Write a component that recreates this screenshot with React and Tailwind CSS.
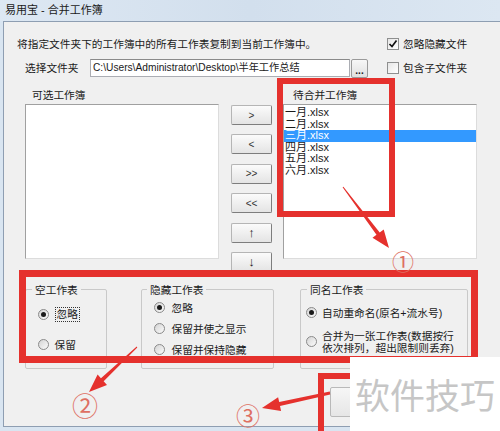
export default function App() {
  const Radio = ({ on }) => (
    <span className="relative flex items-center justify-center w-[11px] h-[11px] shrink-0 rounded-full border border-[#8a8a8a] bg-gradient-to-br from-[#d4d4d4] to-[#fbfbfb]">
      {on && <span className="w-[5px] h-[5px] rounded-full bg-[#1a1a1a]" />}
    </span>
  );
  const Check = ({ on }) => (
    <span className="flex items-center justify-center w-[12px] h-[12px] shrink-0 border border-[#8e8f8f] bg-gradient-to-br from-[#e6e6e6] to-[#ffffff]">
      {on && (
        <svg width="10" height="10" viewBox="0 0 10 10">
          <path d="M1.5 5 L4 7.5 L8.5 1.5" fill="none" stroke="#111" strokeWidth="1.7" />
        </svg>
      )}
    </span>
  );
  const btns = [">", "<", ">>", "<<", "↑", "↓"];
  const items = ["一月.xlsx", "二月.xlsx", "三月.xlsx", "四月.xlsx", "五月.xlsx", "六月.xlsx"];
  return (
    <div className="relative w-[500px] h-[431px] overflow-hidden bg-[#d9e5f1] text-[#1a1a1a] font-[family-name:'Liberation_Sans','Noto_Sans_CJK_SC',sans-serif]">
      <div className="h-[21px] flex items-center pl-[5px] text-[11px] bg-gradient-to-r from-[#dde8f3] via-[#d2dfed] to-[#dce7f2]">
        易用宝 - 合并工作簿
      </div>
      <div className="ml-[3px] h-[406px] border border-r-0 border-[#8e9eb2] bg-[#f0f0f0]">
        {/* top section */}
        <div className="flex pt-[14px]">
          <div className="pl-[13px]">
            <div className="text-[10.7px] leading-[16px]">将指定文件夹下的工作簿中的所有工作表复制到当前工作簿中。</div>
            <div className="flex items-center mt-[7px] ml-[8px] h-[18px]">
              <span className="w-[65px] text-[10.7px] leading-[16px]">选择文件夹</span>
              <div className="w-[260px] h-[18px] bg-white border border-[#abadb3] border-t-[#8a8a8a] flex items-center pl-[2px] text-[10.2px] whitespace-nowrap overflow-hidden">
                C:\Users\Administrator\Desktop\半年工作总结
              </div>
              <div className="ml-[1px] w-[17px] h-[19px] border border-[#9a9a9a] rounded-[2px] bg-gradient-to-b from-[#f7f7f7] to-[#e0e0e0] flex items-end justify-center text-[10px] leading-[12px] font-bold">
                ...
              </div>
            </div>
          </div>
          <div className="ml-[19px] flex flex-col gap-[8px]">
            <div className="h-[16px] flex items-center gap-[4px] text-[10.7px]">
              <Check on />
              <span>忽略隐藏文件</span>
            </div>
            <div className="h-[16px] flex items-center gap-[4px] text-[10.7px]">
              <Check />
              <span>包含子文件夹</span>
            </div>
          </div>
        </div>

        {/* middle section */}
        <div className="flex mt-[11px] ml-[21px]">
          <div className="w-[194px]">
            <div className="h-[14px] leading-[14px] pl-[7px] text-[10.7px]">可选工作簿</div>
            <div className="mt-[2px] h-[155px] bg-white border border-[#dcdcdc] border-t-[#a0a0a0] border-l-[#a0a0a0]" />
          </div>
          <div className="ml-[12px] w-[41px] pt-[17px] flex flex-col gap-[9.4px]">
            {btns.map((b) => (
              <div
                key={b}
                className={
                  b === "↑" || b === "↓"
                    ? "h-[20px] flex items-center justify-center rounded-[2px] border border-[#b5b5b5] border-b-[#7d7d7d] border-r-[#7d7d7d] bg-gradient-to-b from-[#fbfbfb] to-[#e4e4e4] text-[13px] font-bold text-[#222]"
                    : "h-[20px] flex items-center justify-center rounded-[2px] border border-[#b5b5b5] border-b-[#7d7d7d] border-r-[#7d7d7d] bg-gradient-to-b from-[#fbfbfb] to-[#e4e4e4] text-[10px] text-[#333]"
                }
              >
                {b}
              </div>
            ))}
          </div>
          <div className="ml-[11px] w-[194px]">
            <div className="h-[14px] leading-[14px] pl-[10px] text-[10.7px]">待合并工作簿</div>
            <div className="mt-[2px] h-[155px] bg-white border border-[#dcdcdc] border-t-[#a0a0a0] border-l-[#a0a0a0] pt-[2px]">
              {items.map((it, i) => (
                <div
                  key={it}
                  className={
                    i === 2
                      ? "h-[11.6px] leading-[11.6px] pl-[1px] text-[11px] bg-[#3399ff] text-white"
                      : "h-[11.6px] leading-[11.6px] pl-[1px] text-[11px]"
                  }
                >
                  {it}
                </div>
              ))}
            </div>
          </div>
        </div>

        {/* option groups */}
        <div className="flex mt-[11px] ml-[21px]">
          <fieldset className="w-[82px] h-[86px] border border-[#c9c9c9] rounded-[2px]">
            <legend className="ml-[6px] px-[3px] text-[10.7px] leading-[14px]">空工作表</legend>
            <div className="pt-[10px] pl-[11.5px] flex flex-col gap-[14px] text-[10.7px]">
              <div className="h-[16px] flex items-center gap-[6px]">
                <Radio on />
                <span className="border border-dotted border-[#333] px-[1px] leading-[13px]">忽略</span>
              </div>
              <div className="h-[16px] flex items-center gap-[6px]">
                <Radio />
                <span>保留</span>
              </div>
            </div>
          </fieldset>
          <fieldset className="ml-[34px] w-[133px] h-[86px] border border-[#c9c9c9] rounded-[2px]">
            <legend className="ml-[5px] px-[3px] text-[10.7px] leading-[14px]">隐藏工作表</legend>
            <div className="pt-[3px] pl-[11.5px] flex flex-col gap-[5px] text-[10.7px]">
              <div className="h-[16px] flex items-center gap-[7px]">
                <Radio on />
                <span>忽略</span>
              </div>
              <div className="h-[16px] flex items-center gap-[7px]">
                <Radio />
                <span>保留并使之显示</span>
              </div>
              <div className="h-[16px] flex items-center gap-[7px]">
                <Radio />
                <span>保留并保持隐藏</span>
              </div>
            </div>
          </fieldset>
          <fieldset className="ml-[26px] w-[168px] h-[86px] border border-[#c9c9c9] rounded-[2px]">
            <legend className="ml-[6px] px-[3px] text-[10.7px] leading-[14px]">同名工作表</legend>
            <div className="pt-[8px] pl-[4.5px] flex flex-col gap-[9px] text-[10.7px]">
              <div className="h-[16px] flex items-center gap-[5.5px]">
                <Radio on />
                <span className="whitespace-nowrap">自动重命名(原名+流水号)</span>
              </div>
              <div className="flex items-center gap-[5.5px]">
                <Radio />
                <span className="leading-[12px] whitespace-nowrap">
                  合并为一张工作表(数据按行
                  <br />
                  依次排列，超出限制则丢弃)
                </span>
              </div>
            </div>
          </fieldset>
        </div>

        <div className="mt-[18px] ml-[326px] w-[70px] h-[30px] border border-[#b9b9b9] rounded-[2px] bg-gradient-to-b from-[#f6f6f6] to-[#e6e6e6]" />
      </div>

      {/* annotations */}
      <svg className="absolute left-0 top-0 pointer-events-none" width="500" height="431" viewBox="0 0 500 431">
        <rect x="280" y="81" width="112" height="133" fill="none" stroke="#e5312d" strokeWidth="6" />
        <rect x="22.5" y="273.5" width="452" height="86" fill="none" stroke="#e5312d" strokeWidth="7" />
        <rect x="321" y="376" width="60" height="80" fill="none" stroke="#e5312d" strokeWidth="6" />
        <polygon fill="#e5312d" points="343.4,186.7 379.7,232.4 383.7,229.4 389,248 372.5,237.8 376.5,234.8 342.6,187.3" />
        <polygon fill="#e5312d" points="137.3,347.4 103.65,381.3 107,385 89,392 97.6,374.6 100.95,378.3 136.7,346.6" />
        <polygon fill="#e5312d" points="330.2,394.5 280,406.1 281.1,410.9 262,408 278.1,397.3 279.2,402.1 329.8,391.5" />
      </svg>
      <span className="absolute left-[392px] top-[249px] text-[22px] leading-[22px] text-[#de6f62] font-[family-name:'Noto_Sans_CJK_SC',sans-serif]">①</span>
      <span className="absolute left-[72px] top-[392px] text-[26px] leading-[26px] text-[#de6f62] font-[family-name:'Noto_Sans_CJK_SC',sans-serif]">②</span>
      <span className="absolute left-[236px] top-[403px] text-[24px] leading-[24px] text-[#de6f62] font-[family-name:'Noto_Sans_CJK_SC',sans-serif]">③</span>

      <div className="absolute left-[350px] top-[357px] w-[150px] h-[74px] bg-white flex items-center pl-[5px]">
        <span className="text-[35px] leading-[40px] text-[#c6c6c6] whitespace-nowrap font-[family-name:'Noto_Sans_CJK_SC',sans-serif]">软件技巧</span>
      </div>
    </div>
  );
}
